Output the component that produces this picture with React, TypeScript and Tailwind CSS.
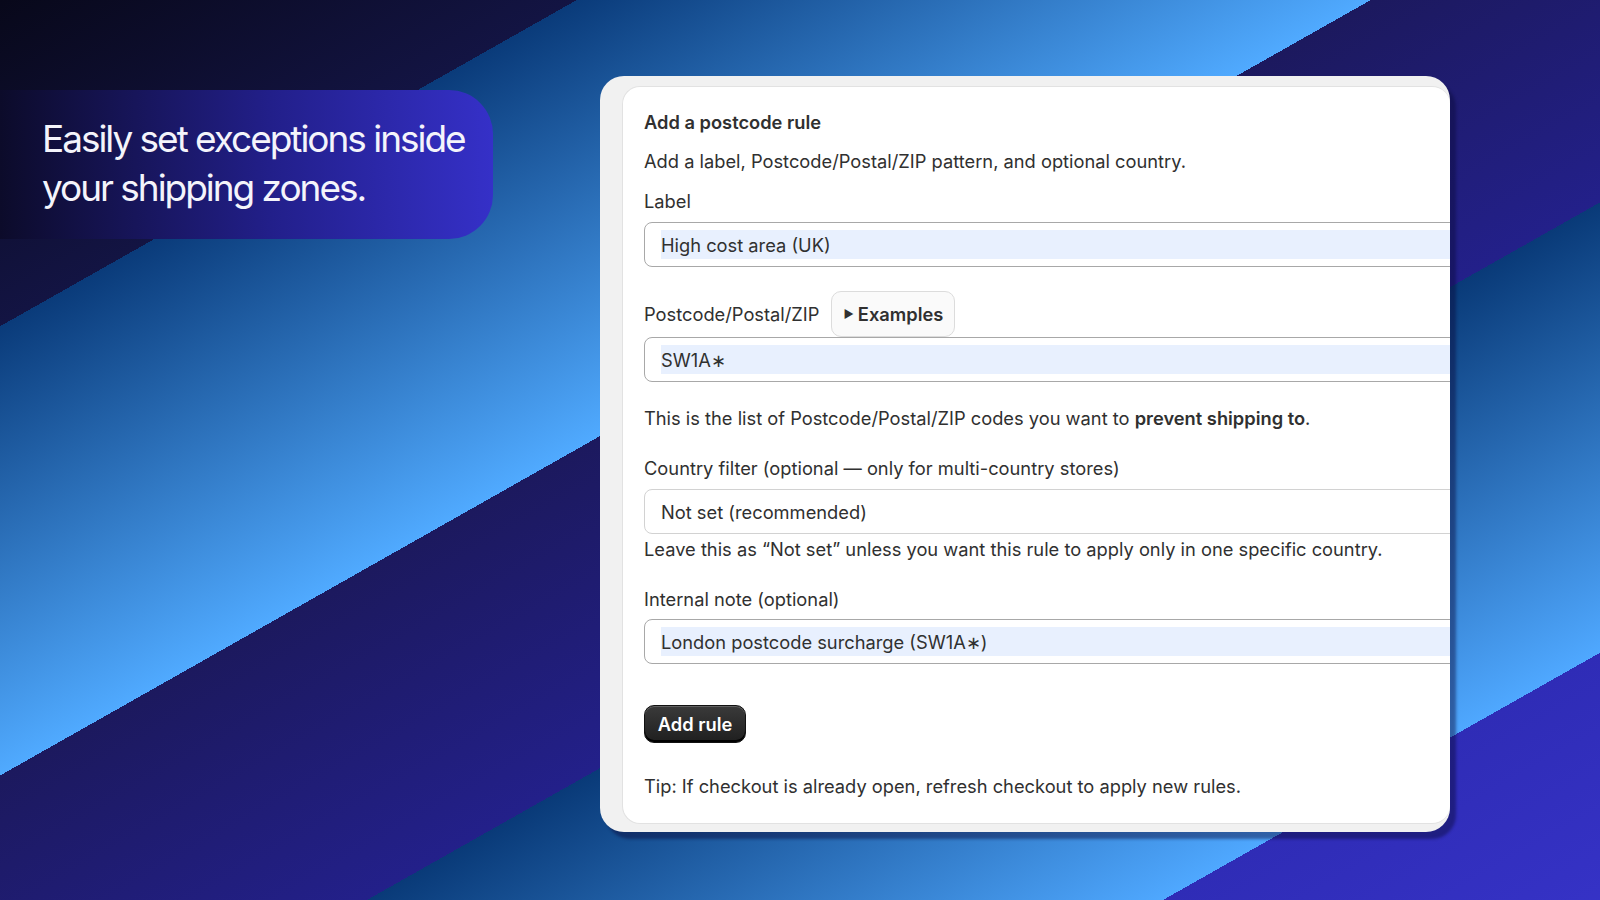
import React from 'react';

// background stripes run at ~150deg, hard stops between bands
const bg =
  'bg-[linear-gradient(150.5deg,#08081a_0px,#131443_284px,#0a3b7a_284px,#50aaff_675px,#1c195e_675px,#23208a_964px,#093a78_964px,#4fa8ff_1356px,#2f2cb6_1356px,#3633c8_1600px)]';

function Field({ value, tinted = true }: { value: string; tinted?: boolean }) {
  return (
    <div
      className={
        'w-[830px] h-[45px] rounded-[8px] bg-white flex items-center pl-4 border ' +
        (tinted ? 'border-[#a8a8a8]' : 'border-[#d2d2d2]')
      }
    >
      {tinted ? (
        <div className="flex-1 h-[29px] bg-[#e8f0fe] flex items-center">{value}</div>
      ) : (
        <div className="flex-1 h-[29px] flex items-center">{value}</div>
      )}
    </div>
  );
}

export default function App() {
  return (
    <div className={`w-full h-[900px] overflow-hidden flex items-start ${bg}`} style={{ fontFamily: 'Inter, "Liberation Sans", sans-serif' }}>
      {/* Headline */}
      <div className="mt-[90px] w-[493px] h-[149px] shrink-0 rounded-r-[44px] bg-[linear-gradient(90deg,#0c0b2a_0%,#221f8a_55%,#3530c8_100%)] pl-[42px] pb-[4px] flex items-center">
        <p className="text-[37px] leading-[49px] tracking-[-0.055em] text-[#f4f4fb] whitespace-nowrap">
          Easily set exceptions inside
          <br />
          your shipping zones.
        </p>
      </div>

      {/* Card */}
      <div className="ml-[107px] mt-[76px] w-[850px] shrink-0 rounded-[24px] bg-[#f1f1f1] pl-[22px] pt-[10px] pb-[8px] shadow-[6px_7px_3px_rgba(10,10,60,0.45)]">
        <div className="rounded-[18px] border border-[#e2e2e2] border-r-0 bg-white overflow-hidden pl-[21px] pt-[23px] pb-[25px] text-[18.3px] leading-[24px] text-[#303030]">
          <div className="font-semibold">Add a postcode rule</div>
          <div className="mt-[15px]">Add a label, Postcode/Postal/ZIP pattern, and optional country.</div>

          <div className="mt-[16px]">Label</div>
          <div className="mt-[9px]">
            <Field value="High cost area (UK)" />
          </div>

          <div className="mt-6 flex items-center gap-[12px]">
            <span>Postcode/Postal/ZIP</span>
            <button className="h-[46px] px-[11px] rounded-[10px] border border-[#dcdcdc] bg-[#fafafa] font-semibold flex items-center gap-[4px]">
              <span className="text-[11px]">▶</span>
              Examples
            </button>
          </div>
          <Field value="SW1A∗" />

          <div className="mt-6">
            This is the list of Postcode/Postal/ZIP codes you want to <span className="font-semibold">prevent shipping to</span>.
          </div>

          <div className="mt-[26px]">Country filter (optional — only for multi-country stores)</div>
          <div className="mt-[9px]">
            <Field value="Not set (recommended)" tinted={false} />
          </div>
          <div className="mt-[3px]">Leave this as “Not set” unless you want this rule to apply only in one specific country.</div>

          <div className="mt-[26px]">Internal note (optional)</div>
          <div className="mt-2">
            <Field value="London postcode surcharge (SW1A∗)" />
          </div>

          <button className="mt-[41px] h-[38px] w-[102px] rounded-[10px] bg-[linear-gradient(180deg,#3a3a3a,#1f1f1f)] border border-[#111] shadow-[inset_0_-2px_0_#000,inset_0_1px_0_rgba(255,255,255,0.2)] text-white font-semibold">
            Add rule
          </button>

          <div className="mt-[31px]">Tip: If checkout is already open, refresh checkout to apply new rules.</div>
        </div>
      </div>
    </div>
  );
}
